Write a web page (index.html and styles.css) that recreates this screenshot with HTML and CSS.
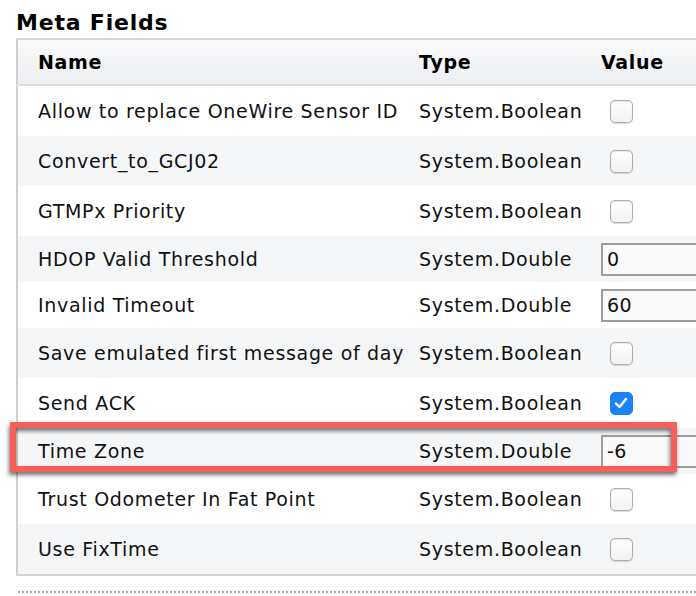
FILE: index.html
```html
<!DOCTYPE html>
<html>
<head>
<meta charset="utf-8">
<link rel="stylesheet" href="styles.css">
</head>
<body>
<div class="page">
  <h2 class="title">Meta Fields</h2>
  <table class="meta">
    <colgroup><col class="c-name"><col class="c-type"><col class="c-value"></colgroup>
    <thead>
      <tr><th>Name</th><th>Type</th><th>Value</th></tr>
    </thead>
    <tbody>
      <tr class="cb"><td>Allow to replace OneWire Sensor ID</td><td>System.Boolean</td><td><span class="check"></span></td></tr>
      <tr class="cb alt"><td>Convert_to_GCJ02</td><td>System.Boolean</td><td><span class="check"></span></td></tr>
      <tr class="cb"><td>GTMPx Priority</td><td>System.Boolean</td><td><span class="check"></span></td></tr>
      <tr class="num alt"><td>HDOP Valid Threshold</td><td>System.Double</td><td><span class="field">0</span></td></tr>
      <tr class="num"><td>Invalid Timeout</td><td>System.Double</td><td><span class="field">60</span></td></tr>
      <tr class="cb alt"><td>Save emulated first message of day</td><td>System.Boolean</td><td><span class="check"></span></td></tr>
      <tr class="cb"><td>Send ACK</td><td>System.Boolean</td><td><span class="check on"><svg viewBox="0 0 22 22" width="22" height="22"><path d="M6 11.5 L9.5 15 L16 7" fill="none" stroke="#fff" stroke-width="2.4" stroke-linecap="round" stroke-linejoin="round"/></svg></span></td></tr>
      <tr class="num alt"><td>Time Zone</td><td>System.Double</td><td><span class="field">-6</span></td></tr>
      <tr class="cb"><td>Trust Odometer In Fat Point</td><td>System.Boolean</td><td><span class="check"></span></td></tr>
      <tr class="cb alt"><td>Use FixTime</td><td>System.Boolean</td><td><span class="check"></span></td></tr>
    </tbody>
  </table>
  <div class="dotted"></div>
  <div class="highlight"></div>
</div>
</body>
</html>
```
FILE: styles.css
```css
html, body {
  margin: 0;
  padding: 0;
  background: #fff;
  overflow: hidden;
}
.page {
  position: relative;
  width: 696px;
  height: 596px;
  overflow: hidden;
  padding-left: 16px;
  box-sizing: border-box;
  font-family: "DejaVu Sans", Verdana, sans-serif;
  color: #111;
}
.title {
  margin: 0 0 2px 0;
  padding-top: 10px;
  font-size: 22px;
  line-height: 26px;
  letter-spacing: 0.8px;
  font-weight: bold;
  color: #000;
}
.meta {
  border-collapse: collapse;
  table-layout: fixed;
  width: 900px;
  border-top: 2px solid #d4d4d4;
  border-left: 2px solid #cfcfcf;
  border-bottom: 2px solid #d4d4d4;
  font-size: 19px;
  letter-spacing: 0.68px;
}
.c-name { width: 382px; }
.c-type { width: 182px; }
.c-value { width: 336px; }
.meta th {
  height: 44px;
  padding: 0 0 0 20px;
  text-align: left;
  font-weight: bold;
  color: #000;
  background: linear-gradient(#fbfbfc, #eceef1);
  border-bottom: 2px solid #dcdde0;
  vertical-align: middle;
}
.meta td {
  padding: 0 0 0 20px;
  vertical-align: middle;
  white-space: nowrap;
}
.meta tr.cb td { height: 50px; }
.meta tr.num td { height: 46px; }
.meta tr.alt td { background: #f5f6f8; }
.check {
  display: inline-block;
  box-sizing: border-box;
  width: 23px;
  height: 23px;
  margin-left: 9px;
  vertical-align: middle;
  border: 1px solid #adadad;
  border-radius: 5px;
  background: linear-gradient(#ffffff, #f2f2f2);
  box-shadow: inset 0 1px 1px rgba(0,0,0,0.1), 0 0.5px 1px rgba(0,0,0,0.15);
}
.check.on {
  border-color: #1a7ff5;
  background: #1b84fa;
  box-shadow: none;
}
.check svg { display: block; margin: -1px; }
.field {
  display: block;
  box-sizing: border-box;
  height: 33px;
  padding-left: 4px;
  line-height: 29px;
  letter-spacing: 0.4px;
  border: 2px solid #9d9d9d;
  border-right: none;
  background: #f9f9f9;
  color: #111;
}
.dotted {
  margin-top: 15px;
  margin-left: 2px;
  border-top: 2px dotted #a8a8a8;
}
.highlight {
  position: absolute;
  left: 10px;
  top: 422px;
  width: 667px;
  height: 50px;
  box-sizing: border-box;
  border: 6px solid #f5605a;
  filter: drop-shadow(-1px 3px 2px rgba(0,0,0,0.55));
}
```
